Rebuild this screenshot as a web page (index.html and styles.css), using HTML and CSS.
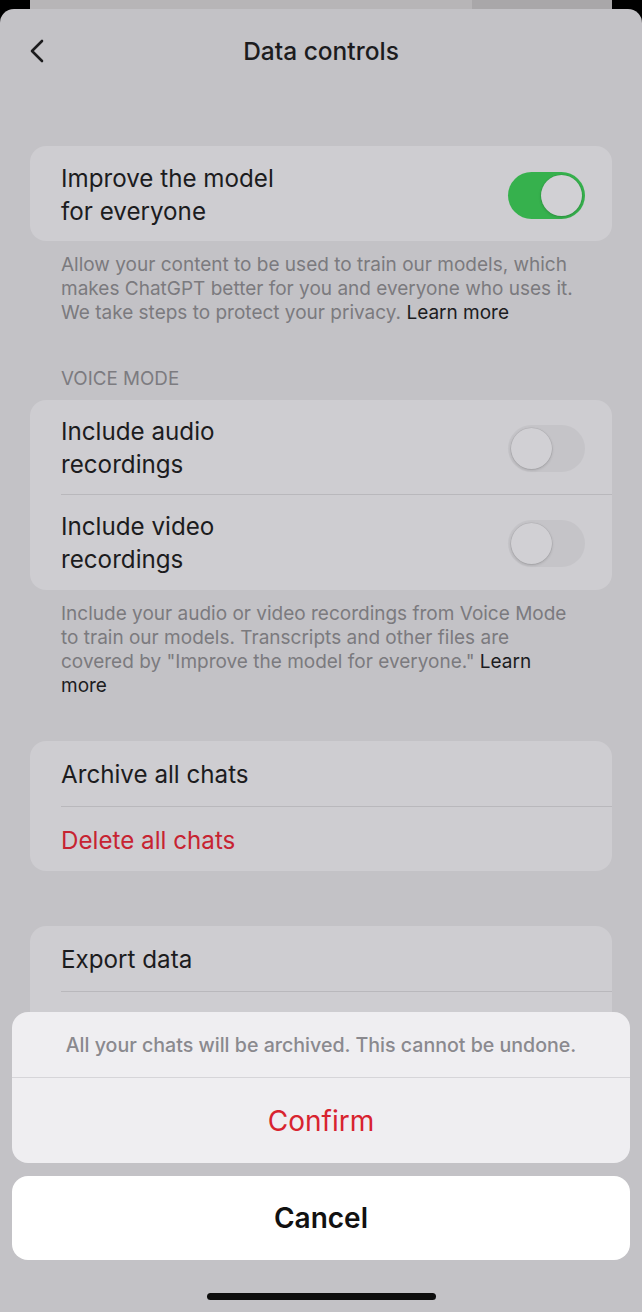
FILE: index.html
```html
<!DOCTYPE html>
<html lang="en">

<head>
  <meta charset="UTF-8" />
  <meta name="viewport" content="width=device-width, initial-scale=1.0"/>
  <title>Data controls</title>
  <link rel="stylesheet" href="styles.css">
</head>
<body>
  <div class="back-sheet">
    <div class="back-sheet-main"></div>
    <div class="back-sheet-side"></div>
  </div>

  <div class="sheet">
    <header class="nav-bar">
      <div class="nav-left">
        <svg class="back-icon" width="16" height="24" viewBox="0 0 16 24" fill="none">
          <path d="M13 2 L3 12 L13 22" stroke="#1c1c1e" stroke-width="2.6" stroke-linecap="round" stroke-linejoin="round"/>
        </svg>
      </div>
      <h1>Data controls</h1>
      <div></div>
    </header>

    <main class="content">
      <div class="card card-first">
        <div class="row toggle-row solo">
          <span class="row-label">Improve the model<br>for everyone</span>
          <span class="switch on"><span class="knob"></span></span>
        </div>
      </div>
      <p class="footnote">Allow your content to be used to train our models, which makes ChatGPT better for you and everyone who uses it. We take steps to protect your privacy. <span class="link">Learn more</span></p>

      <div class="section-label">VOICE MODE</div>
      <div class="card">
        <div class="row toggle-row">
          <span class="row-label">Include audio<br>recordings</span>
          <span class="switch"><span class="knob"></span></span>
        </div>
        <div class="row toggle-row divided">
          <span class="row-label">Include video<br>recordings</span>
          <span class="switch"><span class="knob"></span></span>
        </div>
      </div>
      <p class="footnote">Include your audio or video recordings from Voice Mode to train our models. Transcripts and other files are covered by "Improve the model for everyone." <span class="link">Learn more</span></p>

      <div class="card card-spaced">
        <div class="row">Archive all chats</div>
        <div class="row divided danger">Delete all chats</div>
      </div>

      <div class="card card-export">
        <div class="row">Export data</div>
        <div class="row divided"></div>
      </div>
    </main>

    <div class="action-layer">
      <div class="action-group">
        <div class="action-message">All your chats will be archived. This cannot be undone.</div>
        <button class="action-btn confirm">Confirm</button>
      </div>
      <button class="action-btn cancel">Cancel</button>
      <div class="home-indicator"></div>
    </div>
  </div>
</body>
</html>
```

FILE: styles.css
```css
* {
  margin: 0;
  padding: 0;
  box-sizing: border-box;
  font-family: 'Inter', 'Roboto', sans-serif;
}

body {
  background: #000;
  width: 642px;
  height: 1312px;
  overflow: hidden;
}

.back-sheet {
  display: flex;
  height: 9px;
  margin: 0 30px;
}

.back-sheet-main {
  flex: 1;
  background: #b7b5b7;
}

.back-sheet-side {
  width: 140px;
  background: #a9a7a9;
}

.sheet {
  position: relative;
  height: 1303px;
  background: #c3c2c6;
  border-radius: 14px 14px 0 0;
  overflow: hidden;
}

.nav-bar {
  height: 84px;
  display: grid;
  grid-template-columns: 1fr auto 1fr;
  align-items: center;
}

.nav-left {
  padding-left: 29px;
  display: flex;
  align-items: center;
}

.nav-bar h1 {
  font-size: 24.5px;
  font-weight: 500;
  color: #1c1c1e;
}

.content {
  padding: 0 30px;
}

.card {
  background: #cecdd1;
  border-radius: 16px;
  overflow: hidden;
}

.card-first {
  margin-top: 53px;
}

.card-spaced {
  margin-top: 43px;
}

.card-export {
  margin-top: 55px;
}

/* plain one-line rows */
.row {
  margin-left: 31px;
  padding: 17px 27px 15px 0;
  font-size: 24.2px;
  line-height: 33px;
  color: #1c1c1e;
}

.row.divided {
  border-top: 1px solid #b9b8bc;
  padding-top: 17px;
  padding-bottom: 14px;
  min-height: 65px;
}

/* two-line rows with a switch */
.toggle-row {
  display: flex;
  justify-content: space-between;
  align-items: center;
  padding-top: 15px;
  padding-bottom: 13px;
}

.toggle-row.solo {
  padding-top: 16px;
  padding-bottom: 13px;
}

.toggle-row.divided {
  padding-top: 15px;
  padding-bottom: 14px;
}

.danger {
  color: #c72331;
}

.switch {
  width: 77px;
  height: 47px;
  border-radius: 24px;
  background: #c5c4c8;
  padding: 3px;
  display: flex;
}

.switch .knob {
  width: 41px;
  height: 41px;
  border-radius: 50%;
  background: #d1d0d4;
  box-shadow: 0 1px 3px rgba(0, 0, 0, 0.18), 0 0 0 0.5px rgba(0, 0, 0, 0.08);
}

.switch.on {
  background: #36b14d;
  justify-content: flex-end;
}

.footnote {
  margin-top: 12px;
  padding: 0 30px 0 31px;
  font-size: 19px;
  line-height: 24px;
  color: #7b7a7e;
}

.footnote .link {
  color: #1c1c1e;
}

.section-label {
  margin-top: 44px;
  margin-bottom: 11px;
  padding-left: 31px;
  font-size: 18.8px;
  line-height: 20px;
  color: #7c7b80;
}

.action-layer {
  position: absolute;
  left: 0;
  right: 0;
  bottom: 0;
  padding: 0 12px 12px;
}

.action-group {
  background: #efeef1;
  border-radius: 16px;
  overflow: hidden;
  margin-bottom: 13px;
}

.action-message {
  height: 66px;
  display: flex;
  align-items: center;
  justify-content: center;
  font-size: 19.6px;
  font-weight: 500;
  color: #8a898e;
  border-bottom: 1px solid #d6d5d9;
}

.action-btn {
  display: block;
  width: 100%;
  border: none;
  background: transparent;
  font-size: 28px;
  cursor: pointer;
}

.confirm {
  height: 85px;
  color: #d8232f;
}

.cancel {
  height: 84px;
  background: #fff;
  border-radius: 16px;
  color: #111;
  font-weight: 600;
  margin-bottom: 33px;
}

.home-indicator {
  width: 229px;
  height: 7px;
  margin: 0 auto;
  border-radius: 4px;
  background: #0d0d0d;
}
```
